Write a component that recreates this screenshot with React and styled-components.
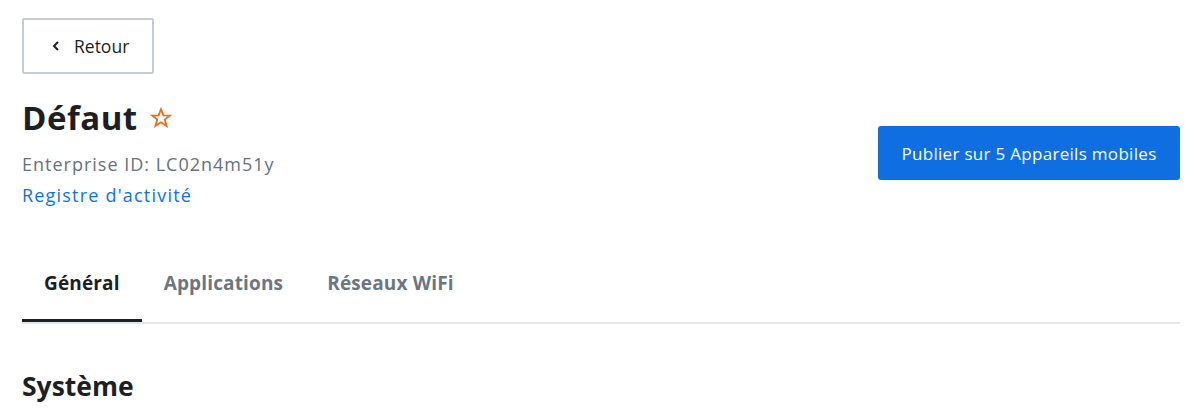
import React from "react";
import styled, { createGlobalStyle } from "styled-components";

const GlobalStyle = createGlobalStyle`
  body {
    margin: 0;
    background: #ffffff;
    font-family: "Open Sans", "Liberation Sans", sans-serif;
    color: #1d1f24;
  }
`;

const Page = styled.div`
  padding: 18px 10px 0 22px;
`;

const BackButton = styled.button`
  display: flex;
  align-items: center;
  gap: 13px;
  height: 56px;
  width: 132px;
  padding: 0 0 0 27px;
  border: 2px solid #c5ccd4;
  border-radius: 2px;
  background: #fff;
  font-family: inherit;
  font-size: 17.5px;
  color: #1d1f24;
`;

const Header = styled.div`
  display: flex;
  justify-content: space-between;
  align-items: flex-start;
  margin-top: 22px;
`;

const TitleRow = styled.div`
  display: flex;
  align-items: center;
  gap: 12px;
`;

const Title = styled.h1`
  margin: 0;
  font-size: 33px;
  line-height: 44px;
  font-weight: 700;
  letter-spacing: 0.5px;
  color: #1d1f24;
`;

const Meta = styled.div`
  margin-top: 12px;
  font-size: 18px;
  line-height: 24px;
  letter-spacing: 1px;
  color: #68717c;
`;

const Link = styled.a`
  display: block;
  margin-top: 7px;
  font-size: 18px;
  line-height: 24px;
  letter-spacing: 1.2px;
  color: #1270e3;
  text-decoration: none;
`;

const PrimaryButton = styled.button`
  margin-top: 30px;
  height: 54px;
  width: 302px;
  border: none;
  border-radius: 3px;
  background: #0f6fe0;
  color: #fff;
  font-family: inherit;
  font-size: 17px;
  letter-spacing: 0.3px;
`;

const Tabs = styled.div`
  display: flex;
  margin-top: 37px;
  border-bottom: 2px solid #e4e6ea;
`;

const Tab = styled.div`
  padding: 3px 22px 0;
  height: 78px;
  box-sizing: border-box;
  display: flex;
  align-items: center;
  font-size: 19px;
  font-weight: 700;
  letter-spacing: 0.15px;
  color: ${p => (p.active ? "#1d1f24" : "#6a7684")};
  border-bottom: 3px solid ${p => (p.active ? "#1d1f24" : "transparent")};
`;

const Section = styled.h2`
  margin: 45px 0 0;
  font-size: 26.5px;
  line-height: 34px;
  font-weight: 700;
  color: #1d1f24;
`;

function Star() {
  return (
    <svg width="22" height="22" viewBox="0 0 24 24" fill="none" stroke="#f06a1d" strokeWidth="2" strokeLinejoin="miter">
      <polygon points="12,2.5 14.6,9.2 21.6,9.4 16.1,13.8 18.1,20.7 12,16.7 5.9,20.7 7.9,13.8 2.4,9.4 9.4,9.2" />
    </svg>
  );
}

function Chevron() {
  return (
    <svg width="10" height="12" viewBox="0 0 10 12" fill="none" stroke="#1d1f24" strokeWidth="2">
      <polyline points="7,2 3,6 7,10" />
    </svg>
  );
}

export default function App() {
  return (
    <Page>
      <GlobalStyle />
      <BackButton>
        <Chevron />
        Retour
      </BackButton>
      <Header>
        <div>
          <TitleRow>
            <Title>Défaut</Title>
            <Star />
          </TitleRow>
          <Meta>Enterprise ID: LC02n4m51y</Meta>
          <Link href="#">Registre d'activité</Link>
        </div>
        <PrimaryButton>Publier sur 5 Appareils mobiles</PrimaryButton>
      </Header>
      <Tabs>
        <Tab active>Général</Tab>
        <Tab>Applications</Tab>
        <Tab>Réseaux WiFi</Tab>
      </Tabs>
      <Section>Système</Section>
    </Page>
  );
}
